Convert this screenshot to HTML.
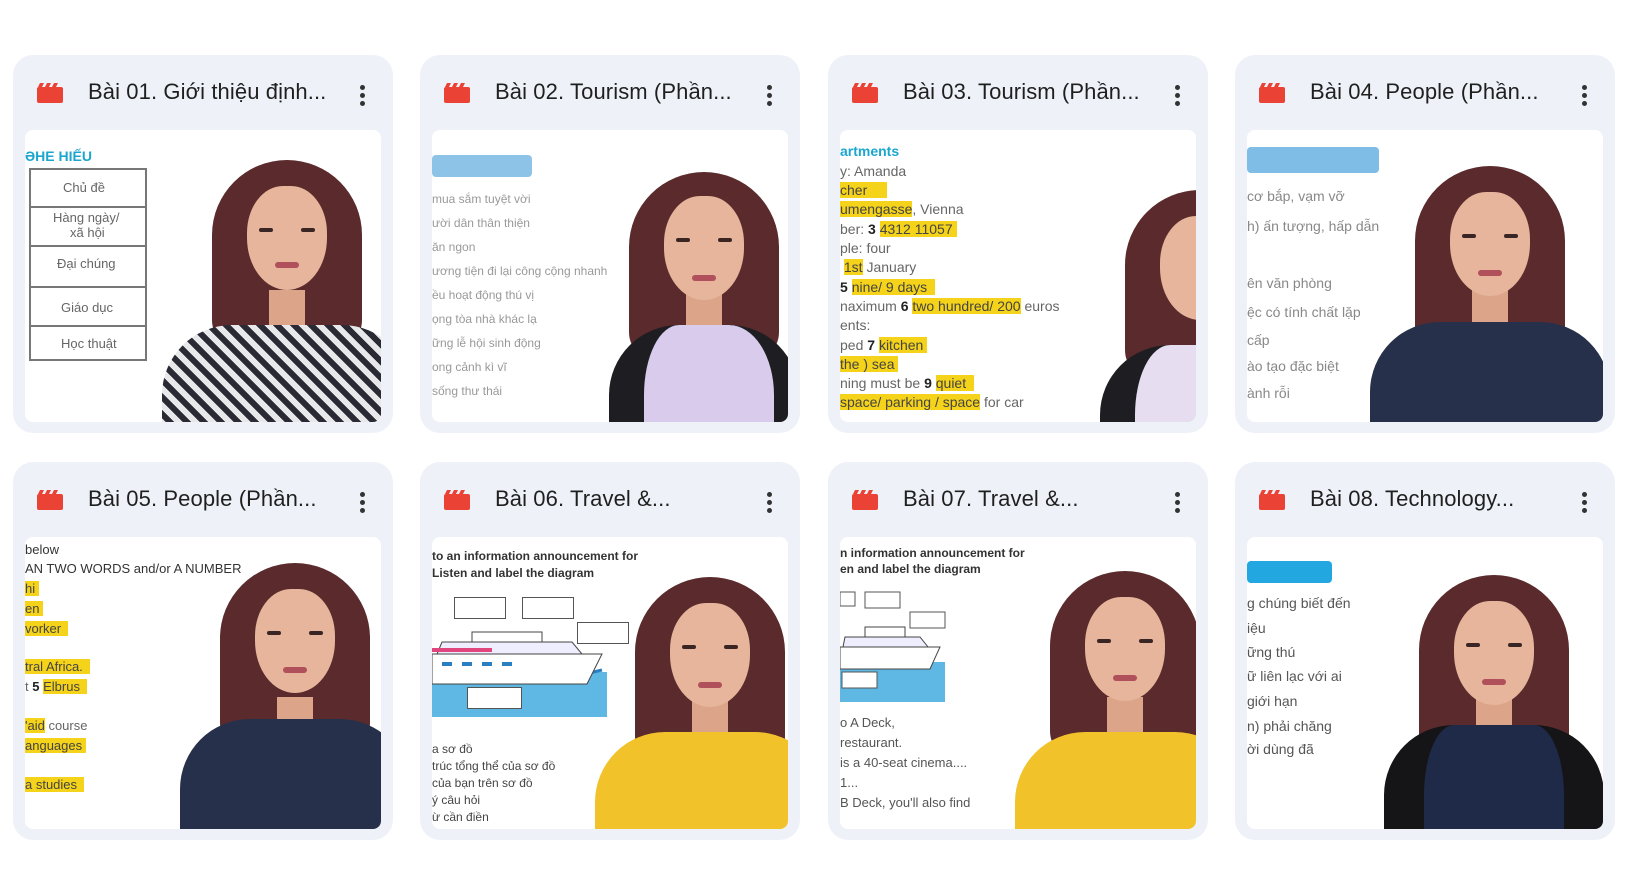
<!DOCTYPE html>
<html><head><meta charset="utf-8">
<style>
*{margin:0;padding:0;box-sizing:border-box}
body{width:1625px;height:894px;background:#fff;position:relative;overflow:hidden;font-family:"Liberation Sans","Noto Sans CJK SC",sans-serif}
.card{position:absolute;width:380px;height:378px;background:#eef2f8;border-radius:20px}
.hd{position:absolute;left:0;top:0;width:380px;height:75px}
.ic{position:absolute;left:24px;top:28px;width:26px;height:20px}
.tt{position:absolute;left:75px;top:24px;font-size:22px;color:#1f1f1f;white-space:nowrap;letter-spacing:0.1px}
.kb{position:absolute;left:347px;top:30px;width:5px}
.kb i{display:block;width:5px;height:5px;border-radius:50%;background:#333;margin-bottom:3px}
.th{position:absolute;left:12px;top:75px;width:356px;height:292px;background:#fff;border-radius:8px;overflow:hidden}
.tx{position:absolute;left:0;font-size:13px;color:#666;white-space:nowrap;font-family:"Liberation Sans","Noto Sans CJK SC",sans-serif}
.hl{background:#f5d31a;color:#444}
.p{position:absolute;top:0;width:0;height:292px}
.hair{position:absolute;left:-75px;top:40px;width:150px;height:190px;background:#5a2a2c;border-radius:75px 75px 30px 30px}
.face{position:absolute;left:-40px;top:66px;width:80px;height:104px;background:#e6b59c;border-radius:45% 45% 50% 50%}
.neck{position:absolute;left:-18px;top:160px;width:36px;height:40px;background:#dca58a}
.body{position:absolute;left:-110px;top:195px;width:220px;height:110px;border-radius:70px 70px 0 0}
.eye{position:absolute;top:108px;width:14px;height:4px;background:#3a2525;border-radius:2px}
.mouth{position:absolute;left:-12px;top:145px;width:24px;height:6px;background:#b0505a;border-radius:3px}
.boat{position:absolute;border:1px solid #555;background:#fff}
</style></head><body>

<div class="card" style="left:13px;top:55px">
 <div class="hd"><svg class="ic" viewBox="0 0 26 20"><rect x="0" y="4" width="26" height="16" rx="2" fill="#ea4335"/><path d="M3 0h4l-2 4H1zM10 0h4l-2 4H8zM17 0h4l-2 4h-4z" fill="#ea4335"/></svg>
 <div class="tt">Bài 01. Giới thiệu định...</div><div class="kb"><i></i><i></i><i></i></div></div>
 <div class="th">
  <div class="tx" style="top:18px;color:#1ba6cf;font-weight:bold;font-size:14px">ƏHE HIẾU</div>
  <div style="position:absolute;left:4px;top:38px;width:118px;height:193px;border:2px solid #777"></div>
  <div style="position:absolute;left:4px;top:76px;width:118px;height:2px;background:#777"></div>
  <div style="position:absolute;left:4px;top:115px;width:118px;height:2px;background:#777"></div>
  <div style="position:absolute;left:4px;top:156px;width:118px;height:2px;background:#777"></div>
  <div style="position:absolute;left:4px;top:195px;width:118px;height:2px;background:#777"></div>
  <div class="tx" style="top:50px;left:38px">Chủ đề</div>
  <div class="tx" style="top:80px;left:28px">Hàng ngày/</div>
  <div class="tx" style="top:95px;left:45px">xã hội</div>
  <div class="tx" style="top:126px;left:32px">Đại chúng</div>
  <div class="tx" style="top:170px;left:36px">Giáo dục</div>
  <div class="tx" style="top:206px;left:36px">Học thuật</div>
  <div class="p" style="left:262px"><div class="hair" style="top:30px"></div><div class="neck"></div><div class="face" style="top:56px"></div><div class="eye" style="left:-28px;top:98px"></div><div class="eye" style="left:14px;top:98px"></div><div class="mouth" style="top:132px"></div><div class="body" style="background:repeating-linear-gradient(45deg,#2a2a35 0 6px,#e8e8ea 6px 12px);left:-125px;width:250px"></div></div>
 </div>
</div>

<div class="card" style="left:420px;top:55px">
 <div class="hd"><svg class="ic" viewBox="0 0 26 20"><rect x="0" y="4" width="26" height="16" rx="2" fill="#ea4335"/><path d="M3 0h4l-2 4H1zM10 0h4l-2 4H8zM17 0h4l-2 4h-4z" fill="#ea4335"/></svg>
 <div class="tt">Bài 02. Tourism (Phần...</div><div class="kb"><i></i><i></i><i></i></div></div>
 <div class="th">
  <div style="position:absolute;left:0;top:25px;width:100px;height:22px;background:#8ec3e8;border-radius:4px"></div>
  <div class="tx" style="top:62px;font-size:12px;color:#999">mua sắm tuyệt vời</div>
  <div class="tx" style="top:86px;font-size:12px;color:#999">ười dân thân thiện</div>
  <div class="tx" style="top:110px;font-size:12px;color:#999">ăn ngon</div>
  <div class="tx" style="top:134px;font-size:12px;color:#999">ương tiện đi lại công cộng nhanh</div>
  <div class="tx" style="top:158px;font-size:12px;color:#999">ều hoạt động thú vị</div>
  <div class="tx" style="top:182px;font-size:12px;color:#999">ọng tòa nhà khác lạ</div>
  <div class="tx" style="top:206px;font-size:12px;color:#999">ững lễ hội sinh động</div>
  <div class="tx" style="top:230px;font-size:12px;color:#999">ong cảnh kì vĩ</div>
  <div class="tx" style="top:254px;font-size:12px;color:#999">sống thư thái</div>
  <div class="p" style="left:272px"><div class="hair" style="top:42px"></div><div class="neck"></div><div class="face" style="top:66px"></div><div class="eye" style="left:-28px"></div><div class="eye" style="left:14px"></div><div class="mouth"></div><div class="body" style="background:#d8cbec;left:-95px;width:190px;border-left:35px solid #1e1e22;border-right:25px solid #1e1e22"></div></div>
 </div>
</div>

<div class="card" style="left:828px;top:55px">
 <div class="hd"><svg class="ic" viewBox="0 0 26 20"><rect x="0" y="4" width="26" height="16" rx="2" fill="#ea4335"/><path d="M3 0h4l-2 4H1zM10 0h4l-2 4H8zM17 0h4l-2 4h-4z" fill="#ea4335"/></svg>
 <div class="tt">Bài 03. Tourism (Phần...</div><div class="kb"><i></i><i></i><i></i></div></div>
 <div class="th">
  <div class="tx" style="top:13px;color:#1ba6cf;font-weight:bold;font-size:14px">artments</div>
  <div class="tx" style="top:33px;font-size:14px">y: Amanda</div>
  <div class="tx" style="top:52px;font-size:14px"><span class="hl">cher&nbsp;&nbsp;&nbsp;&nbsp;&nbsp;</span></div>
  <div class="tx" style="top:71px;font-size:14px"><span class="hl">umengasse</span>, Vienna</div>
  <div class="tx" style="top:91px;font-size:14px">ber: <b style="color:#222">3</b> <span class="hl">4312 11057&nbsp;</span></div>
  <div class="tx" style="top:110px;font-size:14px">ple: four</div>
  <div class="tx" style="top:129px;font-size:14px">&nbsp;<span class="hl">1st</span> January</div>
  <div class="tx" style="top:149px;font-size:14px"><b style="color:#222">5</b> <span class="hl">nine/ 9 days&nbsp;&nbsp;</span></div>
  <div class="tx" style="top:168px;font-size:14px">naximum <b style="color:#222">6</b> <span class="hl">two hundred/ 200</span> euros</div>
  <div class="tx" style="top:187px;font-size:14px">ents:</div>
  <div class="tx" style="top:207px;font-size:14px">ped <b style="color:#222">7</b> <span class="hl">kitchen&nbsp;</span></div>
  <div class="tx" style="top:226px;font-size:14px"><span class="hl">the ) sea&nbsp;</span></div>
  <div class="tx" style="top:245px;font-size:14px">ning must be <b style="color:#222">9</b> <span class="hl">quiet&nbsp;&nbsp;</span></div>
  <div class="tx" style="top:264px;font-size:14px"><span class="hl">space/ parking / space</span> for car</div>
  <div class="p" style="left:360px"><div class="hair" style="top:60px"></div><div class="face" style="top:86px"></div><div class="body" style="background:#e6ddf0;left:-100px;top:215px;border-left:35px solid #1e1e22"></div></div>
 </div>
</div>

<div class="card" style="left:1235px;top:55px">
 <div class="hd"><svg class="ic" viewBox="0 0 26 20"><rect x="0" y="4" width="26" height="16" rx="2" fill="#ea4335"/><path d="M3 0h4l-2 4H1zM10 0h4l-2 4H8zM17 0h4l-2 4h-4z" fill="#ea4335"/></svg>
 <div class="tt">Bài 04. People (Phần...</div><div class="kb"><i></i><i></i><i></i></div></div>
 <div class="th">
  <div style="position:absolute;left:0;top:17px;width:132px;height:26px;background:#7fbde6;border-radius:4px"></div>
  <div class="tx" style="top:58px;font-size:14px;color:#888">cơ bắp, vạm vỡ</div>
  <div class="tx" style="top:88px;font-size:14px;color:#888">h) ấn tượng, hấp dẫn</div>
  <div class="tx" style="top:145px;font-size:14px;color:#888">ên văn phòng</div>
  <div class="tx" style="top:174px;font-size:14px;color:#888">ệc có tính chất lặp</div>
  <div class="tx" style="top:202px;font-size:14px;color:#888">cấp</div>
  <div class="tx" style="top:228px;font-size:14px;color:#888">ào tạo đặc biệt</div>
  <div class="tx" style="top:255px;font-size:14px;color:#888">ành rỗi</div>
  <div class="p" style="left:243px"><div class="hair" style="top:36px"></div><div class="neck"></div><div class="face" style="top:62px"></div><div class="eye" style="left:-28px;top:104px"></div><div class="eye" style="left:14px;top:104px"></div><div class="mouth" style="top:140px"></div><div class="body" style="background:#27304a;left:-120px;width:240px;top:192px"></div></div>
 </div>
</div>

<div class="card" style="left:13px;top:462px">
 <div class="hd"><svg class="ic" viewBox="0 0 26 20"><rect x="0" y="4" width="26" height="16" rx="2" fill="#ea4335"/><path d="M3 0h4l-2 4H1zM10 0h4l-2 4H8zM17 0h4l-2 4h-4z" fill="#ea4335"/></svg>
 <div class="tt">Bài 05. People (Phần...</div><div class="kb"><i></i><i></i><i></i></div></div>
 <div class="th">
  <div class="tx" style="top:5px;color:#333">below</div>
  <div class="tx" style="top:24px;color:#333">AN TWO WORDS and/or A NUMBER</div>
  <div class="tx" style="top:44px"><span class="hl">hi&nbsp;</span></div>
  <div class="tx" style="top:64px"><span class="hl">en&nbsp;</span></div>
  <div class="tx" style="top:84px"><span class="hl">vorker&nbsp;&nbsp;</span></div>
  <div class="tx" style="top:122px"><span class="hl">tral Africa.&nbsp;&nbsp;</span></div>
  <div class="tx" style="top:142px">t <b style="color:#222">5</b> <span class="hl">Elbrus&nbsp;&nbsp;</span></div>
  <div class="tx" style="top:181px"><span class="hl">'aid</span> course</div>
  <div class="tx" style="top:201px"><span class="hl">anguages&nbsp;</span></div>
  <div class="tx" style="top:240px"><span class="hl">a studies&nbsp;&nbsp;</span></div>
  <div class="p" style="left:270px"><div class="hair" style="top:26px"></div><div class="neck"></div><div class="face" style="top:52px"></div><div class="eye" style="left:-28px;top:94px"></div><div class="eye" style="left:14px;top:94px"></div><div class="mouth" style="top:130px"></div><div class="body" style="background:#27304a;left:-115px;width:230px;top:182px;height:120px"></div></div>
 </div>
</div>

<div class="card" style="left:420px;top:462px">
 <div class="hd"><svg class="ic" viewBox="0 0 26 20"><rect x="0" y="4" width="26" height="16" rx="2" fill="#ea4335"/><path d="M3 0h4l-2 4H1zM10 0h4l-2 4H8zM17 0h4l-2 4h-4z" fill="#ea4335"/></svg>
 <div class="tt">Bài 06. Travel &amp;...</div><div class="kb"><i></i><i></i><i></i></div></div>
 <div class="th">
  <div class="tx" style="top:12px;font-size:12px;font-weight:bold;color:#333">to an information announcement for</div>
  <div class="tx" style="top:29px;font-size:12px;font-weight:bold;color:#333">Listen and label the diagram</div>
  <svg style="position:absolute;left:0;top:55px" width="200" height="125" viewBox="0 0 200 125">
   <rect x="0" y="80" width="175" height="45" fill="#5fb7e4"/>
   <path d="M0 78 Q20 70 40 78 T80 78 T120 78 T170 78" stroke="#2a7fc0" stroke-width="3" fill="none"/>
   <path d="M0 62 L170 62 L155 92 L0 92 Z" fill="#fff" stroke="#444"/>
   <path d="M10 50 L140 50 L150 62 L5 62 Z" fill="#eef" stroke="#444"/>
   <rect x="0" y="56" width="60" height="4" fill="#e0457d"/>
   <rect x="40" y="40" width="70" height="10" fill="#fff" stroke="#444"/>
   <g fill="#2a7fc0"><rect x="10" y="70" width="10" height="4"/><rect x="30" y="70" width="10" height="4"/><rect x="50" y="70" width="10" height="4"/><rect x="70" y="70" width="10" height="4"/></g>
  </svg>
  <div class="boat" style="left:22px;top:60px;width:52px;height:22px"></div>
  <div class="boat" style="left:90px;top:60px;width:52px;height:22px"></div>
  <div class="boat" style="left:145px;top:85px;width:52px;height:22px"></div>
  <div class="boat" style="left:35px;top:150px;width:55px;height:22px"></div>
  <div class="tx" style="top:205px;font-size:12px;color:#444">a sơ đồ</div>
  <div class="tx" style="top:222px;font-size:12px;color:#444">trúc tổng thể của sơ đồ</div>
  <div class="tx" style="top:239px;font-size:12px;color:#444">của bạn trên sơ đồ</div>
  <div class="tx" style="top:256px;font-size:12px;color:#444">ý câu hỏi</div>
  <div class="tx" style="top:273px;font-size:12px;color:#444">ừ cần điền</div>
  <div class="p" style="left:278px"><div class="hair" style="top:40px"></div><div class="neck"></div><div class="face" style="top:66px"></div><div class="eye" style="left:-28px"></div><div class="eye" style="left:14px"></div><div class="mouth"></div><div class="body" style="background:#f2c22a;left:-115px;width:230px"></div></div>
 </div>
</div>

<div class="card" style="left:828px;top:462px">
 <div class="hd"><svg class="ic" viewBox="0 0 26 20"><rect x="0" y="4" width="26" height="16" rx="2" fill="#ea4335"/><path d="M3 0h4l-2 4H1zM10 0h4l-2 4H8zM17 0h4l-2 4h-4z" fill="#ea4335"/></svg>
 <div class="tt">Bài 07. Travel &amp;...</div><div class="kb"><i></i><i></i><i></i></div></div>
 <div class="th">
  <div class="tx" style="top:9px;font-size:12px;font-weight:bold;color:#333">n information announcement for</div>
  <div class="tx" style="top:25px;font-size:12px;font-weight:bold;color:#333">en and label the diagram</div>
  <svg style="position:absolute;left:0;top:50px" width="130" height="115" viewBox="0 0 130 115">
   <rect x="0" y="75" width="105" height="40" fill="#5fb7e4"/>
   <path d="M0 60 L100 60 L90 82 L0 82 Z" fill="#fff" stroke="#444"/>
   <path d="M5 50 L80 50 L88 60 L3 60 Z" fill="#eef" stroke="#444"/>
   <rect x="25" y="40" width="40" height="10" fill="#fff" stroke="#444"/>
   <rect x="0" y="5" width="15" height="14" fill="#fff" stroke="#555"/>
   <rect x="25" y="5" width="35" height="16" fill="#fff" stroke="#555"/>
   <rect x="70" y="25" width="35" height="16" fill="#fff" stroke="#555"/>
   <rect x="2" y="85" width="35" height="16" fill="#fff" stroke="#555"/>
  </svg>
  <div class="tx" style="top:178px;font-size:13px;color:#555">o A Deck,</div>
  <div class="tx" style="top:198px;font-size:13px;color:#555">restaurant.</div>
  <div class="tx" style="top:218px;font-size:13px;color:#555">is a 40-seat cinema....</div>
  <div class="tx" style="top:238px;font-size:13px;color:#555">1...</div>
  <div class="tx" style="top:258px;font-size:13px;color:#555">B Deck, you'll also find</div>
  <div class="p" style="left:285px"><div class="hair" style="top:34px"></div><div class="neck"></div><div class="face" style="top:60px"></div><div class="eye" style="left:-28px;top:102px"></div><div class="eye" style="left:14px;top:102px"></div><div class="mouth" style="top:138px"></div><div class="body" style="background:#f2c22a;left:-110px;width:230px"></div></div>
 </div>
</div>

<div class="card" style="left:1235px;top:462px">
 <div class="hd"><svg class="ic" viewBox="0 0 26 20"><rect x="0" y="4" width="26" height="16" rx="2" fill="#ea4335"/><path d="M3 0h4l-2 4H1zM10 0h4l-2 4H8zM17 0h4l-2 4h-4z" fill="#ea4335"/></svg>
 <div class="tt">Bài 08. Technology...</div><div class="kb"><i></i><i></i><i></i></div></div>
 <div class="th">
  <div style="position:absolute;left:0;top:24px;width:85px;height:22px;background:#22a7e0;border-radius:4px"></div>
  <div class="tx" style="top:58px;font-size:14px;color:#555">g chúng biết đến</div>
  <div class="tx" style="top:83px;font-size:14px;color:#555">iệu</div>
  <div class="tx" style="top:107px;font-size:14px;color:#555">ững thú</div>
  <div class="tx" style="top:131px;font-size:14px;color:#555">ữ liên lạc với ai</div>
  <div class="tx" style="top:156px;font-size:14px;color:#555">giới hạn</div>
  <div class="tx" style="top:181px;font-size:14px;color:#555">n) phải chăng</div>
  <div class="tx" style="top:204px;font-size:14px;color:#555">ời dùng đã</div>
  <div class="p" style="left:247px"><div class="hair" style="top:38px"></div><div class="neck"></div><div class="face" style="top:64px"></div><div class="eye" style="left:-28px;top:106px"></div><div class="eye" style="left:14px;top:106px"></div><div class="mouth" style="top:142px"></div><div class="body" style="background:#1f2a48;left:-110px;width:220px;top:188px;border-left:40px solid #151518;border-right:40px solid #151518;height:120px"></div></div>
 </div>
</div>

</body></html>
